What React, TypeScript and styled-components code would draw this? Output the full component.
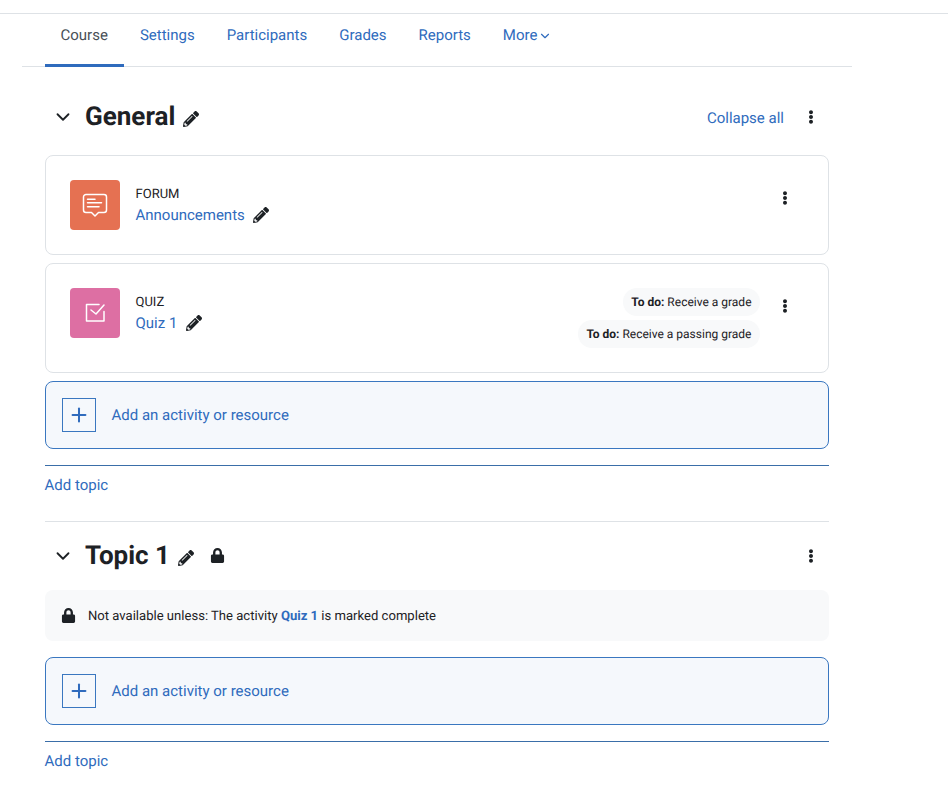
import React from 'react';
import styled, { createGlobalStyle } from 'styled-components';
import { FaPencilAlt, FaLock, FaEllipsisV } from 'react-icons/fa';
import { ChevronDown, Plus } from 'lucide-react';

const GlobalStyle = createGlobalStyle`
  html, body {
    margin: 0;
    padding: 0;
    background: #fff;
    font-family: Roboto, "Liberation Sans", sans-serif;
    font-size: 15px;
    color: #1d2125;
    text-rendering: geometricPrecision;
  }
  * { box-sizing: border-box; }
`;

const Page = styled.div`
  width: 948px;
  height: 785px;
  overflow: hidden;
  padding-top: 13px;
`;

const TopRule = styled.div`
  height: 1px;
  background: #dee2e6;
`;

const Nav = styled.nav`
  width: 830px;
  height: 53px;
  margin-left: 22px;
  padding-left: 23px;
  display: flex;
  border-bottom: 1px solid #dee2e6;
`;

const Tab = styled.a<{ $active?: boolean }>`
  height: 53px;
  padding: 12px 16.5px 0 15.5px;
  line-height: 18px;
  color: ${({ $active }) => ($active ? '#495057' : '#2f6bbd')};
  border-bottom: 3px solid ${({ $active }) => ($active ? '#2f6bbd' : 'transparent')};
  display: flex;
  gap: 1px;
  white-space: nowrap;
`;

const TabCaret = styled(ChevronDown)`
  margin-top: 3px;
`;

const Content = styled.main`
  width: 784px;
  margin-left: 45px;
`;

const SectionHeader = styled.div<{ $top: number }>`
  display: flex;
  align-items: center;
  height: 36px;
  margin-top: ${({ $top }) => $top}px;
`;

const Toggle = styled(ChevronDown)`
  margin: 0 11.5px 0 6.5px;
  flex: none;
`;

const Title = styled.h3`
  margin: 0;
  font-size: 26px;
  font-weight: 700;
  line-height: 32px;
  white-space: nowrap;
`;

const TitlePencil = styled(FaPencilAlt)`
  margin: 3px 0 0 7.5px;
  font-size: 16px;
`;

const TitleLock = styled(FaLock)`
  margin: -2px 0 0 16px;
  font-size: 15px;
`;

const HeaderActions = styled.div`
  margin-left: auto;
  display: flex;
  align-items: center;
`;

const TextLink = styled.a`
  color: #2f6bbd;
  line-height: 18px;
`;

const CollapseLink = styled(TextLink)`
  margin-top: 2px;
`;

const Kebab = styled(FaEllipsisV)<{ $left: number }>`
  margin-left: ${({ $left }) => $left}px;
  font-size: 14px;
  flex: none;
`;

const HeaderKebab = styled(Kebab)`
  margin-right: 11px;
`;

const ActivityCard = styled.div<{ $height: number; $top: number }>`
  height: ${({ $height }) => $height}px;
  margin-top: ${({ $top }) => $top}px;
  padding: 24px 36px 0 24px;
  border: 1px solid #dee2e6;
  border-radius: 8px;
  display: flex;
  align-items: flex-start;
`;

const IconTile = styled.div<{ $color: string }>`
  width: 50px;
  height: 50px;
  border-radius: 4px;
  background: ${({ $color }) => $color};
  display: flex;
  align-items: center;
  justify-content: center;
  flex: none;
`;

const ActivityText = styled.div`
  margin-left: 15.5px;
`;

const ActivityType = styled.div`
  font-size: 13px;
  line-height: 16px;
  margin-top: 7px;
`;

const ActivityName = styled.div`
  display: flex;
  align-items: center;
  margin-top: 1px;
  height: 22px;
`;

const ActivityLink = styled.a`
  color: #2f6bbd;
`;

const ActivityPencil = styled(FaPencilAlt)`
  margin-left: 8.5px;
  font-size: 16px;
`;

const CardRight = styled.div`
  margin-left: auto;
  display: flex;
  align-items: flex-start;
`;

const Badges = styled.div`
  display: flex;
  flex-direction: column;
  align-items: flex-end;
  gap: 4px;
`;

const Badge = styled.div`
  height: 28px;
  padding: 0 8.5px 0 8px;
  border-radius: 14px;
  background: #f8f9fa;
  font-size: 12px;
  line-height: 28px;
  white-space: nowrap;
`;

const CardKebab = styled(Kebab)`
  margin-top: 11px;
`;

const AddActivity = styled.div<{ $top: number }>`
  height: 68px;
  margin-top: ${({ $top }) => $top}px;
  padding-left: 16px;
  border: 1px solid #3a77c0;
  border-radius: 8px;
  background: #f5f8fc;
  display: flex;
  align-items: center;
  color: #2f6bbd;
`;

const AddIcon = styled.div`
  width: 34px;
  height: 34px;
  border: 1px solid #3a77c0;
  display: flex;
  align-items: center;
  justify-content: center;
  margin-right: 15.5px;
`;

const AddTopicRow = styled.div`
  margin: 16px 0 0;
  border-top: 1px solid #3a6ea8;
  padding-top: 10px;
  height: 56px;
  text-indent: -0.5px;
`;

const SectionDivider = styled.div`
  height: 1px;
  background: #dee2e6;
`;

const Availability = styled.div`
  height: 51px;
  margin-top: 16px;
  padding-left: 16px;
  border-radius: 8px;
  background: #f8f9fa;
  display: flex;
  align-items: center;
  font-size: 13.08px;
`;

const AvailabilityLock = styled(FaLock)`
  margin: -1px 12px 0 0;
  font-size: 15px;
`;

const AvailabilityText = styled.span`
  margin-top: 1px;
  white-space: pre;
`;

const Strong = styled.strong`
  color: #2f6bbd;
  font-weight: 700;
`;

const BadgeLabel = styled.strong`
  font-weight: 700;
`;

const ForumIcon = () => (
  <svg width="26" height="26" viewBox="0 0 26 26" fill="none" stroke="#fff" strokeWidth="1.5" strokeLinecap="round" strokeLinejoin="round">
    <path d="M4 2.500h18a2.500 2.500 0 0 1 2.500 2.500v13a2.500 2.500 0 0 1-2.500 2.500h-5.500l-3.500 3.500-3.500-3.500h-5.500a2.500 2.500 0 0 1-2.500-2.500v-13a2.500 2.500 0 0 1 2.500-2.500z" />
    <path d="M5.500 7.300h7.500M5.500 10.700h14M5.500 14.700h11.500" />
  </svg>
);

const QuizIcon = () => (
  <svg width="20" height="20" viewBox="0 0 20 20" fill="none" stroke="#fff" strokeWidth="1.5" strokeLinecap="round" strokeLinejoin="round">
    <path d="M19 8.500v9.500H1.500V1.500H14" />
    <path d="M6 7l5 4 8-9" />
  </svg>
);

const AddBlock: React.FC<{ top: number }> = ({ top }) => (
  <>
    <AddActivity $top={top}>
      <AddIcon>
        <Plus size={22} strokeWidth={2.2} />
      </AddIcon>
      Add an activity or resource
    </AddActivity>
    <AddTopicRow>
      <TextLink>Add topic</TextLink>
    </AddTopicRow>
  </>
);

const App: React.FC = () => (
  <Page>
    <GlobalStyle />
    <TopRule />
    <Nav>
      <Tab $active>Course</Tab>
      <Tab>Settings</Tab>
      <Tab>Participants</Tab>
      <Tab>Grades</Tab>
      <Tab>Reports</Tab>
      <Tab>
        More
        <TabCaret size={14} strokeWidth={2} />
      </Tab>
    </Nav>
    <Content>
      <SectionHeader $top={32}>
        <Toggle size={22} />
        <Title>General</Title>
        <TitlePencil />
        <HeaderActions>
          <CollapseLink>Collapse all</CollapseLink>
          <HeaderKebab $left={20} />
        </HeaderActions>
      </SectionHeader>
      <ActivityCard $height={100} $top={20}>
        <IconTile $color="#e57152">
          <ForumIcon />
        </IconTile>
        <ActivityText>
          <ActivityType>FORUM</ActivityType>
          <ActivityName>
            <ActivityLink>Announcements</ActivityLink>
            <ActivityPencil />
          </ActivityName>
        </ActivityText>
        <CardRight>
          <CardKebab $left={0} />
        </CardRight>
      </ActivityCard>
      <ActivityCard $height={110} $top={8}>
        <IconTile $color="#dd6fa3">
          <QuizIcon />
        </IconTile>
        <ActivityText>
          <ActivityType>QUIZ</ActivityType>
          <ActivityName>
            <ActivityLink>Quiz 1</ActivityLink>
            <ActivityPencil />
          </ActivityName>
        </ActivityText>
        <CardRight>
          <Badges>
            <Badge>
              <BadgeLabel>To do:</BadgeLabel> Receive a grade
            </Badge>
            <Badge>
              <BadgeLabel>To do:</BadgeLabel> Receive a passing grade
            </Badge>
          </Badges>
          <CardKebab $left={18} />
        </CardRight>
      </ActivityCard>
      <AddBlock top={8} />
      <SectionDivider />
      <SectionHeader $top={16}>
        <Toggle size={22} />
        <Title>Topic 1</Title>
        <TitlePencil />
        <TitleLock />
        <HeaderActions>
          <HeaderKebab $left={0} />
        </HeaderActions>
      </SectionHeader>
      <Availability>
        <AvailabilityLock />
        <AvailabilityText>
          Not available unless: The activity <Strong>Quiz 1</Strong> is marked complete
        </AvailabilityText>
      </Availability>
      <AddBlock top={16} />
    </Content>
  </Page>
);

export default App;
